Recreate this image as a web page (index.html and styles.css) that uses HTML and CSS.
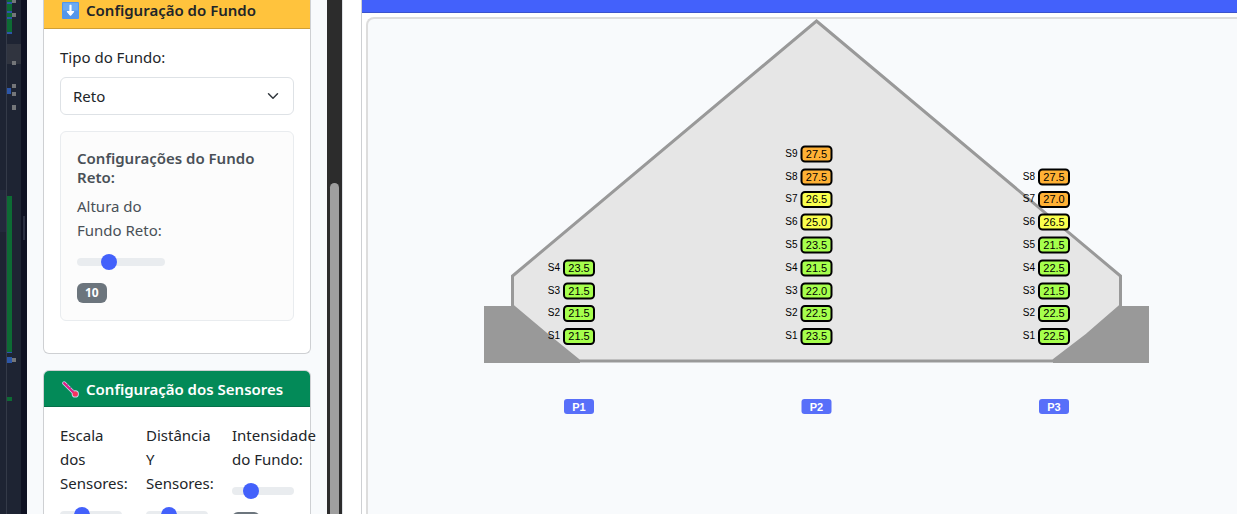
FILE: index.html
```html
<!DOCTYPE html>
<html lang="pt-BR">
<head>
<meta charset="utf-8">
<meta name="viewport" content="width=device-width, initial-scale=1">
<title>Configuração</title>
<link rel="stylesheet" href="styles.css">
</head>
<body>
<div class="app">
  <div class="minimap" aria-hidden="true">
    <svg width="27" height="514" viewBox="0 0 27 514">
      <rect width="21" height="514" fill="#1e2433"/>
      <rect x="21" width="6" height="514" fill="#0f1223"/>
      <rect y="190" width="6" height="42" fill="#23293c"/>
      <rect x="6" width="1" height="514" fill="#343a48"/>
      <rect x="7" y="44" width="14" height="20" fill="#30343f"/>
      <rect x="7" y="0" width="5" height="32" fill="#0d6b34"/>
      <path d="M7 3h5M7 12h5M7 18h5M7 33h5" stroke="#2c56a8" stroke-width="2"/>
      <path d="M12 1h4M12 15h4M12 63h4M12 86h4M12 94h4" stroke="#747679" stroke-width="4"/>
      <rect x="12" y="105" width="4" height="5" fill="#747679"/>
      <rect x="7" y="88" width="4" height="6" fill="#2c56a8"/>
      <rect x="7" y="196" width="5" height="156" fill="#0d6b34"/>
      <rect x="7" y="352" width="5" height="1" fill="#2c56a8"/>
      <rect x="7" y="357" width="5" height="6" fill="#2c56a8"/>
      <rect x="12" y="358" width="4" height="4" fill="#747679"/>
      <rect x="7" y="397" width="5" height="4" fill="#0d6b34"/>
      <rect x="23" y="216" width="2" height="24" fill="#2b3042"/>
    </svg>
  </div>

  <aside class="sidebar">
    <section class="card card-top">
      <h2 class="card-header header-warning">
        <svg class="icon" viewBox="0 0 16 16" aria-hidden="true">
          <rect width="16" height="16" rx="1" fill="#5396eb"/>
          <path d="M1 1h14v7H1z" fill="#6cabf3"/>
          <path d="M7.500 3h1v6h2.500l-3 3.500L5 9h2.500z" fill="#fff" stroke="#fff" stroke-width="1" stroke-linejoin="round"/>
        </svg>
        Configuração do Fundo
      </h2>
      <div class="card-body">
        <label class="label" for="tipo">Tipo do Fundo:</label>
        <select class="select" id="tipo"><option>Reto</option></select>
        <div class="options">
          <h3 class="options-title">Configurações do Fundo Reto:</h3>
          <div class="field field-narrow">
            <label class="label" for="altura">Altura do Fundo Reto:</label>
            <input class="range" id="altura" type="range" min="0" max="30" value="10">
            <span class="badge">10</span>
          </div>
        </div>
      </div>
    </section>

    <section class="card">
      <h2 class="card-header header-success">
        <svg class="icon" viewBox="0 0 16 16" aria-hidden="true">
          <path d="M2 2L12 12" stroke="#c7d9ec" stroke-width="3.500" stroke-linecap="round"/>
          <circle cx="12.500" cy="12.200" r="3.400" fill="#c7d9ec"/>
          <path d="M2 2L12 12" stroke="#e01b84" stroke-width="2" stroke-linecap="round"/>
          <circle cx="12.500" cy="12.200" r="2.500" fill="#f8315f"/>
          <path d="M6 3l-1 1M8.500 5.500l-1 1M11 8l-1 1" stroke="#7a7196"/>
        </svg>
        Configuração dos Sensores
      </h2>
      <div class="card-body columns">
        <div class="field">
          <label class="label" for="escala">Escala dos Sensores:</label>
          <input class="range" id="escala" type="range" min="0" max="100" value="31">
        </div>
        <div class="field">
          <label class="label" for="distancia">Distância Y Sensores:</label>
          <input class="range" id="distancia" type="range" min="0" max="100" value="33">
        </div>
        <div class="field">
          <label class="label" for="intensidade">Intensidade do Fundo:</label>
          <input class="range" id="intensidade" type="range" min="0" max="100" value="24">
          <span class="badge badge-empty"></span>
        </div>
      </div>
    </section>
  </aside>

  <div class="scrollbar" aria-hidden="true"><div class="scrollbar-thumb"></div></div>

  <main class="main">
    <section class="panel">
      <div class="panel-header"></div>
      <div class="canvas">
        <svg class="silo" viewBox="368 19 869 495" role="img" aria-label="Sensores P1, P2 e P3">
          <defs><rect id="tag" x="-15" y="-7.500" width="30" height="15" rx="3.500" stroke="#000" stroke-width="2"/></defs>
          <path d="M816.500 21L1120.500 276V306L1087 335L1053 361H579L547 335L512.500 306V276Z" fill="#e6e6e6" stroke="#999" stroke-width="3"/>
          <path d="M484 306H513L547 335L580 361V363H484ZM1149 306H1120L1087 335L1053 361V363H1149Z" fill="#999"/>

          <g transform="translate(579 0)">
            <g class="green">
              <use href="#tag" y="268"/><use href="#tag" y="291"/><use href="#tag" y="313.500"/><use href="#tag" y="336.500"/>
            </g>
            <g class="value">
              <text y="272">23.5</text><text y="295">21.5</text><text y="317">21.5</text><text y="340">21.5</text>
            </g>
            <g class="name">
              <text x="-19" y="271">S4</text><text x="-19" y="294">S3</text><text x="-19" y="316">S2</text><text x="-19" y="339">S1</text>
            </g>
            <rect class="post" x="-15" y="399" width="30" height="15" rx="3"/>
            <text class="post-name" y="411">P1</text>
          </g>

          <g transform="translate(816.500 0)">
            <g class="orange"><use href="#tag" y="154"/><use href="#tag" y="177"/></g>
            <g class="yellow"><use href="#tag" y="199.500"/><use href="#tag" y="222"/></g>
            <g class="green">
              <use href="#tag" y="245"/><use href="#tag" y="268"/><use href="#tag" y="291"/><use href="#tag" y="313.500"/><use href="#tag" y="336.500"/>
            </g>
            <g class="value">
              <text y="158">27.5</text><text y="181">27.5</text><text y="203">26.5</text><text y="226">25.0</text><text y="249">23.5</text>
              <text y="272">21.5</text><text y="295">22.0</text><text y="317">22.5</text><text y="340">23.5</text>
            </g>
            <g class="name">
              <text x="-19" y="157">S9</text><text x="-19" y="180">S8</text><text x="-19" y="202">S7</text><text x="-19" y="225">S6</text><text x="-19" y="248">S5</text>
              <text x="-19" y="271">S4</text><text x="-19" y="294">S3</text><text x="-19" y="316">S2</text><text x="-19" y="339">S1</text>
            </g>
            <rect class="post" x="-15" y="399" width="30" height="15" rx="3"/>
            <text class="post-name" y="411">P2</text>
          </g>

          <g transform="translate(1054 0)">
            <g class="orange"><use href="#tag" y="177"/><use href="#tag" y="199.500"/></g>
            <g class="yellow"><use href="#tag" y="222"/></g>
            <g class="green">
              <use href="#tag" y="245"/><use href="#tag" y="268"/><use href="#tag" y="291"/><use href="#tag" y="313.500"/><use href="#tag" y="336.500"/>
            </g>
            <g class="value">
              <text y="181">27.5</text><text y="203">27.0</text><text y="226">26.5</text><text y="249">21.5</text>
              <text y="272">22.5</text><text y="295">21.5</text><text y="317">22.5</text><text y="340">22.5</text>
            </g>
            <g class="name">
              <text x="-19" y="180">S8</text><text x="-19" y="202">S7</text><text x="-19" y="225">S6</text><text x="-19" y="248">S5</text>
              <text x="-19" y="271">S4</text><text x="-19" y="294">S3</text><text x="-19" y="316">S2</text><text x="-19" y="339">S1</text>
            </g>
            <rect class="post" x="-15" y="399" width="30" height="15" rx="3"/>
            <text class="post-name" y="411">P3</text>
          </g>
        </svg>
      </div>
    </section>
  </main>
</div>
</body>
</html>
```
FILE: styles.css
```css
* { box-sizing: border-box; }

body {
  margin: 0;
  overflow: hidden;
  font-family: "Segoe UI", "Noto Sans", "Open Sans", sans-serif;
  font-size: 15px;
  line-height: 24px;
  color: #212529;
  background: #fff;
}

.app { display: flex; height: 100vh; }

.minimap { flex: none; width: 27px; background: #1e2433; overflow: hidden; }
.minimap svg { display: block; }

.sidebar {
  flex: none;
  width: 300px;
  padding: 0 16px;
  overflow: hidden;
  background: #f8fafc;
}

.card {
  margin-bottom: 16px;
  border: 1px solid #ced0d3;
  border-radius: 6px;
  background: #fff;
}
.card-top { border-top: 0; border-radius: 0 0 6px 6px; }

.card-header {
  display: flex;
  align-items: center;
  gap: 7px;
  margin: 0;
  padding: 9px 18px 7px;
  border-bottom: 1px solid;
  border-radius: 5px 5px 0 0;
  font-size: 15px;
  font-weight: 600;
  line-height: 19px;
  white-space: nowrap;
}
.card-top .card-header { padding: 1px 18px 8px; border-radius: 0; }
.header-warning { background: #ffc33d; border-color: #cf9f35; }
.header-success { background: #038a58; border-color: #05704a; color: #fff; }
.icon { flex: none; width: 17px; height: 17px; }

.card-body { padding: 16px; }

.label { display: block; margin-bottom: 8px; }

.select {
  display: block;
  width: 100%;
  height: 38px;
  margin-bottom: 16px;
  padding: 0 12px;
  border: 1px solid #dee2e6;
  border-radius: 6px;
  appearance: none;
  font: inherit;
  color: inherit;
  background: #fff url("data:image/svg+xml,%3Csvg xmlns='http://www.w3.org/2000/svg' viewBox='0 0 16 16'%3E%3Cpath fill='none' stroke='%23343a40' stroke-linecap='round' stroke-linejoin='round' stroke-width='2' d='m2 5 6 6 6-6'/%3E%3C/svg%3E") no-repeat right 14px center / 12px 12px;
}

.options {
  margin-bottom: 16px;
  padding: 17px 16px;
  border: 1px solid #e9ecef;
  border-radius: 6px;
  background: #fcfcfc;
  color: #495057;
}
.options-title {
  margin: 0 0 7px;
  font-size: 15px;
  font-weight: 600;
  line-height: 19px;
}

.columns { display: grid; grid-template-columns: repeat(3, minmax(0, 1fr)); gap: 24px; }
.field { display: flex; flex-direction: column; align-items: flex-start; min-width: 0; }
.field-narrow { width: 88px; }

.range {
  display: block;
  width: 100%;
  height: 24px;
  margin: 0 0 9px;
  appearance: none;
  background: transparent;
}
.range::-webkit-slider-runnable-track { height: 8px; border-radius: 8px; background: #e9ecef; }
.range::-webkit-slider-thumb {
  width: 16px;
  height: 16px;
  margin-top: -4px;
  appearance: none;
  border-radius: 50%;
  background: #4361fb;
}

.badge {
  padding: 4px 8px;
  border-radius: 6px;
  background: #6c757d;
  color: #fff;
  font-size: 12px;
  font-weight: 700;
  line-height: 12px;
}
.badge-empty { width: 28px; height: 20px; }

.scrollbar {
  flex: none;
  width: 15px;
  padding: 183px 3px 0;
  background: #2c2c2c;
}
.scrollbar-thumb { height: 100%; border-radius: 5px 5px 0 0; background: #9f9f9f; }

.main {
  flex: 1;
  min-width: 0;
  padding-left: 18px;
  border-left: 1px solid #dee2e6;
  overflow: hidden;
}
.panel { display: flex; flex-direction: column; height: 100%; border-left: 1px solid #ced0d3; }
.panel-header { flex: none; height: 13px; background: #4361fb; border-bottom: 1px solid #3b53cd; }
.canvas {
  flex: 1;
  min-height: 0;
  margin: 4px 0 0 4px;
  border: solid #ddd;
  border-width: 2px 0 0 2px;
  border-radius: 8px 0 0 0;
  background: #f8fafc;
  overflow: hidden;
}

.silo { display: block; width: 100%; font-family: "Liberation Sans", Arial, sans-serif; }
.green { fill: #a6ff4d; }
.yellow { fill: #f9ff4d; }
.orange { fill: #ffb135; }
.value { font-size: 11px; text-anchor: middle; fill: #000; }
.name { font-size: 10px; text-anchor: end; fill: #000; }
.post { fill: #586ff9; }
.post-name { font-size: 11px; font-weight: 700; text-anchor: middle; fill: #fff; }
```
